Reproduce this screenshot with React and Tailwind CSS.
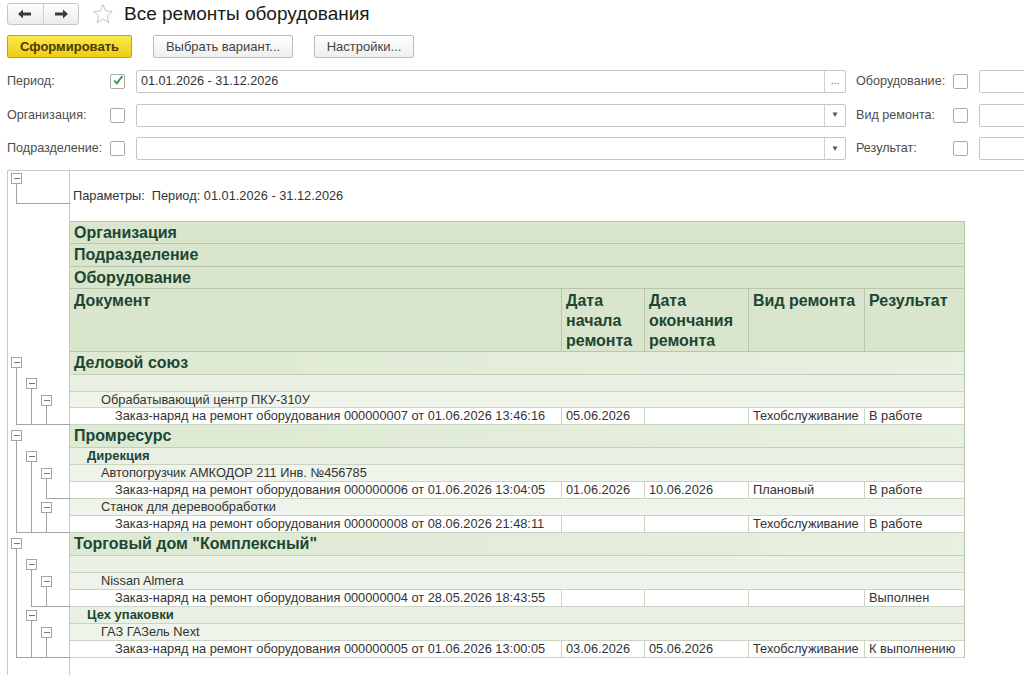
import React from "react";

const rows = [
  { t: "group", text: "Деловой союз" },
  { t: "div", text: "" },
  { t: "eq", text: "Обрабатывающий центр ПКУ-310У", h: "h-[16px]" },
  { t: "doc", text: "Заказ-наряд на ремонт оборудования 000000007 от 01.06.2026 13:46:16", c: ["05.06.2026", "", "Техобслуживание", "В работе"] },
  { t: "group", text: "Промресурс" },
  { t: "div", text: "Дирекция" },
  { t: "eq", text: "Автопогрузчик АМКОДОР 211 Инв. №456785" },
  { t: "doc", text: "Заказ-наряд на ремонт оборудования 000000006 от 01.06.2026 13:04:05", c: ["01.06.2026", "10.06.2026", "Плановый", "В работе"] },
  { t: "eq", text: "Станок для деревообработки" },
  { t: "doc", text: "Заказ-наряд на ремонт оборудования 000000008 от 08.06.2026 21:48:11", c: ["", "", "Техобслуживание", "В работе"] },
  { t: "group", text: 'Торговый дом "Комплексный"' },
  { t: "div", text: "" },
  { t: "eq", text: "Nissan Almera" },
  { t: "doc", text: "Заказ-наряд на ремонт оборудования 000000004 от 28.05.2026 18:43:55", c: ["", "", "", "Выполнен"] },
  { t: "div", text: "Цех упаковки" },
  { t: "eq", text: "ГАЗ ГАЗель Next" },
  { t: "doc", text: "Заказ-наряд на ремонт оборудования 000000005 от 01.06.2026 13:00:05", c: ["03.06.2026", "05.06.2026", "Техобслуживание", "К выполнению"] },
];

// [center x, box top, end of branch] in page coords
const nodes = [
  [16.5, 173, 203],
  [16.5, 357, 424], [31.5, 378, 424], [46.5, 395, 424],
  [16.5, 430, 532], [31.5, 451, 532], [46.5, 468, 498], [46.5, 502, 532],
  [16.5, 538, 657], [31.5, 559, 606], [46.5, 576, 606], [31.5, 610, 657], [46.5, 627, 657],
];

function Tree() {
  return (
    <svg width="62" height="504" className="block">
      <g transform="translate(-8 -171)" stroke="#a3a3a3" fill="none" shapeRendering="crispEdges">
        {nodes.map(([cx, y, end], i) => (
          <g key={i}>
            <path d={`M${cx} ${y + 11}V${end + 0.5}H70`} />
            <rect x={cx - 5} y={y + 0.5} width="10" height="10" fill="#fff" />
            <path d={`M${cx - 3} ${y + 5.5}H${cx + 3}`} stroke="#777" />
          </g>
        ))}
      </g>
    </svg>
  );
}

function Check({ on }) {
  return (
    <div className="w-[15px] h-[15px] shrink-0 border border-[#aaaaaa] rounded-[2px] bg-white flex items-center justify-center">
      {on && (
        <svg width="15" height="15" viewBox="0 0 15 15" className="-mt-[3px] ml-[1px]">
          <path d="M2.5 7.5 L6 11 L13 2" stroke="#2f9a3a" strokeWidth="2.2" fill="none" />
        </svg>
      )}
    </div>
  );
}

function Field({ label, on, value, btn, rlabel, ron }) {
  return (
    <div className="flex items-center h-[23px] pl-[7px]">
      <div className="w-[103px] shrink-0 text-[12.6px] text-[#4d4d4d]">{label}</div>
      <Check on={on} />
      <div className="ml-[11px] w-[710px] shrink-0 h-[23px] border border-[#c6c6c6] rounded-[2px] flex bg-white">
        <div className="flex-1 pl-[4px] flex items-center text-[12.6px] text-[#333]">{value}</div>
        <div className="w-[21px] border-l border-[#d0d0d0] flex items-center justify-center text-[10px] text-[#555]">
          {btn === "dots" ? <span className="-mt-[3px]">...</span> : <span className="text-[8px]">▼</span>}
        </div>
      </div>
      <div className="ml-[10px] w-[97px] shrink-0 text-[12.6px] text-[#4d4d4d]">{rlabel}</div>
      <Check on={ron} />
      <div className="ml-[11px] w-[70px] shrink-0 h-[23px] border border-[#c6c6c6] rounded-[2px] bg-white" />
    </div>
  );
}

function Row({ r }) {
  if (r.t === "group")
    return (
      <div className="h-[23px] border-b border-[#c3cfbb] bg-gradient-to-r from-[#dde9d2] to-[#e8f0e0] pl-[4px] flex items-center text-[16px] font-bold text-[#1c4634]">
        {r.text}
      </div>
    );
  if (r.t === "div")
    return (
      <div className="h-[17px] border-b border-[#c9d4c2] bg-[#eaf1e4] pl-[17px] flex items-center text-[13px] font-bold text-[#1c4634]">
        {r.text}
      </div>
    );
  if (r.t === "eq")
    return (
      <div className={`${r.h || "h-[17px]"} border-b border-[#c9d4c2] bg-[#eef4ea] pl-[31px] flex items-center text-[12.8px] text-[#333]`}>
        {r.text}
      </div>
    );
  return (
    <div className="h-[17px] border-b border-[#c9d4c2] bg-white grid grid-cols-[492px_83px_104px_116px_99px] text-[12.8px] text-[#333]">
      <div className="pl-[45px] border-r border-[#c9d4c2] flex items-center whitespace-nowrap overflow-hidden">{r.text}</div>
      {r.c.map((v, i) => (
        <div key={i} className={`pl-[4px] flex items-center whitespace-nowrap overflow-hidden ${i < 3 ? "border-r border-[#c9d4c2]" : ""}`}>
          {v}
        </div>
      ))}
    </div>
  );
}

export default function App() {
  return (
    <div className="h-[675px] w-full overflow-hidden bg-white font-['Liberation_Sans',Arial,sans-serif] text-[#333]">
      {/* title bar */}
      <div className="flex items-center h-[24px] mt-[2px] pl-[7px]">
        <div className="flex h-[22px] w-[72px] rounded-[3px] border border-[#c6c6c6] bg-gradient-to-b from-white to-[#ebebeb]">
          <div className="flex-1 border-r border-[#cfcfcf] flex items-center justify-center">
            <svg width="14" height="10" viewBox="0 0 14 10">
              <path d="M0 5 L5 0.5 V3.6 H13 V6.4 H5 V9.5 Z" fill="#3a3a3a" />
            </svg>
          </div>
          <div className="flex-1 flex items-center justify-center">
            <svg width="14" height="10" viewBox="0 0 14 10">
              <path d="M14 5 L9 0.5 V3.6 H1 V6.4 H9 V9.5 Z" fill="#3a3a3a" />
            </svg>
          </div>
        </div>
        <svg width="22" height="22" viewBox="0 0 24 24" className="ml-[13px]">
          <path d="M12 1.8 L14.9 8.6 L22.2 9.2 L16.7 14 L18.3 21.2 L12 17.4 L5.7 21.2 L7.3 14 L1.8 9.2 L9.1 8.6 Z" fill="none" stroke="#bdbdbd" strokeWidth="1" strokeLinejoin="round" />
        </svg>
        <div className="ml-[10px] text-[19px] text-[#1a1a1a]">Все ремонты оборудования</div>
      </div>

      {/* command bar */}
      <div className="flex gap-[21px] mt-[9px] pl-[7px] h-[23px]">
        <div className="w-[125px] rounded-[2px] border border-[#c9a400] bg-gradient-to-b from-[#fbe94a] to-[#f0cc05] flex items-center justify-center text-[13px] font-bold text-[#4a3b00]">
          Сформировать
        </div>
        <div className="w-[140px] rounded-[2px] border border-[#bcbcbc] bg-gradient-to-b from-white to-[#eeeeee] flex items-center justify-center text-[13px] text-[#444]">
          Выбрать вариант...
        </div>
        <div className="w-[100px] rounded-[2px] border border-[#bcbcbc] bg-gradient-to-b from-white to-[#eeeeee] flex items-center justify-center text-[13px] text-[#444]">
          Настройки...
        </div>
      </div>

      {/* filters */}
      <div className="mt-[12px] flex flex-col gap-[10.5px]">
        <Field label="Период:" on value="01.01.2026 - 31.12.2026" btn="dots" rlabel="Оборудование:" />
        <Field label="Организация:" value="" btn="drop" rlabel="Вид ремонта:" />
        <Field label="Подразделение:" value="" btn="drop" rlabel="Результат:" />
      </div>

      {/* report */}
      <div className="mt-[10px] ml-[7px] flex border-l border-t border-[#c8c8c8] h-[600px]">
        <div className="w-[62px] shrink-0 border-r border-[#c8c8c8]">
          <Tree />
        </div>
        <div className="flex flex-col">
          <div className="h-[50px] flex items-center pl-[3px] text-[12.8px] text-[#333] whitespace-nowrap">
            <span>Параметры:</span>
            <span className="ml-[7px]">Период: 01.01.2026 - 31.12.2026</span>
          </div>
          <div className="w-[895px] border-t border-r border-[#b9c6ae]">
            <div className="h-[22px] border-b border-[#b9c6ae] bg-[#d9e5cd] pl-[4px] flex items-center text-[16px] font-bold text-[#1c4634]">Организация</div>
            <div className="h-[23px] border-b border-[#b9c6ae] bg-[#d9e5cd] pl-[4px] flex items-center text-[16px] font-bold text-[#1c4634]">Подразделение</div>
            <div className="h-[22px] border-b border-[#b9c6ae] bg-[#d9e5cd] pl-[4px] flex items-center text-[16px] font-bold text-[#1c4634]">Оборудование</div>
            <div className="h-[63px] border-b border-[#b9c6ae] bg-[#d9e5cd] grid grid-cols-[492px_83px_104px_116px_99px] text-[16px] leading-[20px] font-bold text-[#1c4634]">
              <div className="pl-[4px] pt-[2px] border-r border-[#b9c6ae]">Документ</div>
              <div className="pl-[4px] pt-[2px] border-r border-[#b9c6ae]">Дата<br />начала<br />ремонта</div>
              <div className="pl-[4px] pt-[2px] border-r border-[#b9c6ae]">Дата<br />окончания<br />ремонта</div>
              <div className="pl-[4px] pt-[2px] border-r border-[#b9c6ae]">Вид ремонта</div>
              <div className="pl-[4px] pt-[2px]">Результат</div>
            </div>
            {rows.map((r, i) => (
              <Row key={i} r={r} />
            ))}
          </div>
        </div>
      </div>
    </div>
  );
}
